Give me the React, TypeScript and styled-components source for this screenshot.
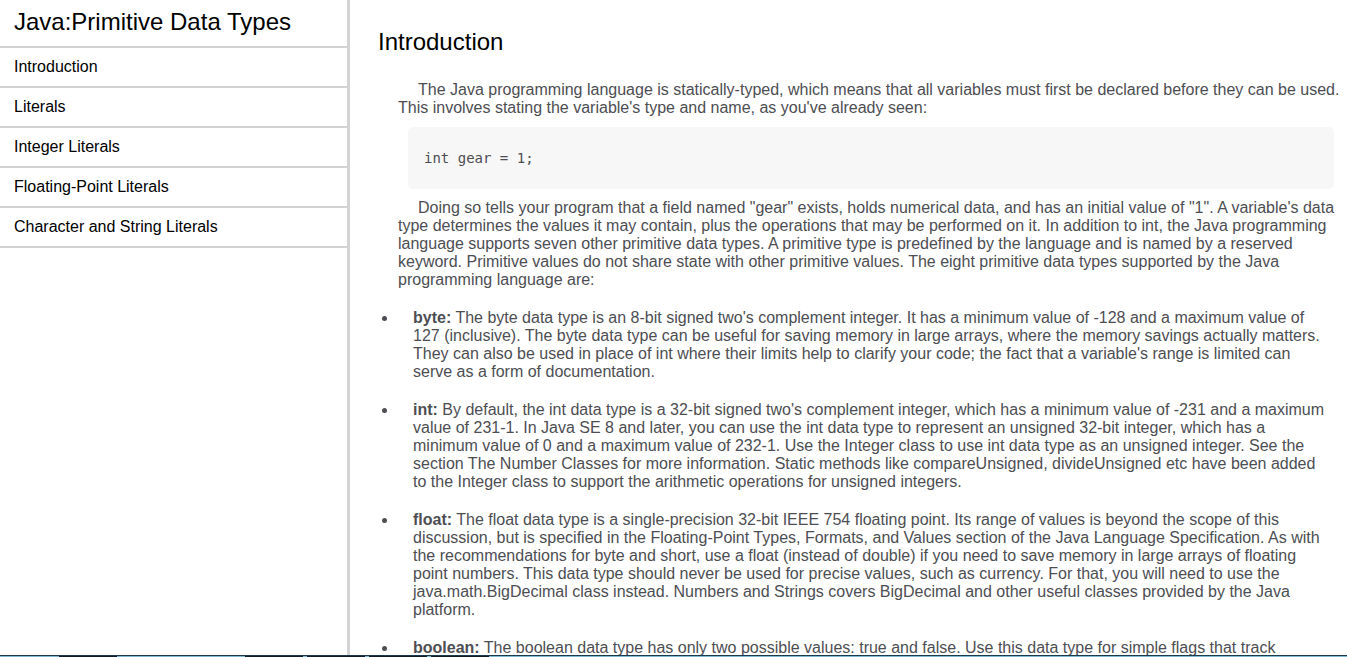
import React from "react";
import styled, { createGlobalStyle } from "styled-components";

const GlobalStyle = createGlobalStyle`
  * { box-sizing: border-box; }
  html, body, #root { height: 100%; }
  body {
    margin: 0;
    overflow: hidden;
    background: #fff;
    font-family: "Liberation Sans", Arial, sans-serif;
    font-size: 16px;
    line-height: 18px;
    color: #000;
  }
`;

const Shell = styled.div`
  display: flex;
  flex-direction: column;
  height: 100%;
`;

const Page = styled.div`
  flex: 1;
  min-height: 0;
  display: grid;
  grid-template-columns: 350px minmax(0, 1fr);
  grid-template-rows: minmax(0, 1fr);
  overflow: hidden;
`;

const Sidebar = styled.nav`
  border-right: 3px solid #d3d3d3;
`;

const SidebarTitle = styled.h1`
  margin: 0;
  padding: 8px 14px 10px;
  font-size: 24px;
  line-height: 28px;
  font-weight: 400;
`;

const NavList = styled.ul`
  list-style: none;
  margin: 0;
  padding: 0;
  border-bottom: 2px solid #d3d3d3;
`;

const NavLink = styled.a`
  display: block;
  border-top: 2px solid #d3d3d3;
  padding: 10px 14px;
  color: #000;
  text-decoration: none;
`;

const Main = styled.main`
  min-height: 0;
  overflow: hidden;
  padding: 28px 4px 0 28px;
`;

const SectionTitle = styled.h2`
  margin: 0 0 25px;
  font-size: 24px;
  line-height: 28px;
  font-weight: 400;
`;

const Paragraph = styled.p`
  margin: 0 0 0 20px;
  text-indent: 20px;
  color: #4d4e53;
`;

const Code = styled.pre`
  margin: 10px 9px 10px 30px;
  padding: 22px 16px;
  border-radius: 5px;
  background: #f7f7f7;
  font-family: Consolas, "DejaVu Sans Mono", monospace;
  font-size: 14px;
  line-height: 18px;
  color: #4d4e53;
`;

const TypeList = styled.ul`
  margin: 20px 0 0;
  padding: 0 12px 0 20px;
  color: #4d4e53;
`;

const TypeItem = styled.li`
  margin-bottom: 20px;
  padding-left: 15px;
`;

const TaskbarEdge = styled.div`
  display: flex;
  height: 2px;
  border-top: 1px solid #1b3a50;
`;

const EdgePart = styled.span<{ $width?: number; $lit?: boolean }>`
  flex: ${({ $width }) => ($width ? `0 0 ${$width}px` : "1")};
  background: ${({ $lit }) => ($lit ? "#7fb9d6" : "#101c26")};
`;

const topics = [
  ["Introduction", "introduction"],
  ["Literals", "literals"],
  ["Integer Literals", "integer-literals"],
  ["Floating-Point Literals", "floating-point-literals"],
  ["Character and String Literals", "character-and-string-literals"],
];

const types = [
  ["byte", "The byte data type is an 8-bit signed two's complement integer. It has a minimum value of -128 and a maximum value of 127 (inclusive). The byte data type can be useful for saving memory in large arrays, where the memory savings actually matters. They can also be used in place of int where their limits help to clarify your code; the fact that a variable's range is limited can serve as a form of documentation."],
  ["int", "By default, the int data type is a 32-bit signed two's complement integer, which has a minimum value of -231 and a maximum value of 231-1. In Java SE 8 and later, you can use the int data type to represent an unsigned 32-bit integer, which has a minimum value of 0 and a maximum value of 232-1. Use the Integer class to use int data type as an unsigned integer. See the section The Number Classes for more information. Static methods like compareUnsigned, divideUnsigned etc have been added to the Integer class to support the arithmetic operations for unsigned integers."],
  ["float", "The float data type is a single-precision 32-bit IEEE 754 floating point. Its range of values is beyond the scope of this discussion, but is specified in the Floating-Point Types, Formats, and Values section of the Java Language Specification. As with the recommendations for byte and short, use a float (instead of double) if you need to save memory in large arrays of floating point numbers. This data type should never be used for precise values, such as currency. For that, you will need to use the java.math.BigDecimal class instead. Numbers and Strings covers BigDecimal and other useful classes provided by the Java platform."],
  ["boolean", "The boolean data type has only two possible values: true and false. Use this data type for simple flags that track"],
];

export default function App() {
  return (
    <>
      <GlobalStyle />
      <Shell>
        <Page>
          <Sidebar>
            <SidebarTitle>Java:Primitive Data Types</SidebarTitle>
            <NavList>
              {topics.map(([label, id]) => (
                <li key={id}><NavLink href={`#${id}`}>{label}</NavLink></li>
              ))}
            </NavList>
          </Sidebar>
          <Main>
            <SectionTitle id="introduction">Introduction</SectionTitle>
            <Paragraph>
              The Java programming language is statically-typed, which means that all variables must first be declared before they can be used. This involves stating the variable's type and name, as you've already seen:
            </Paragraph>
            <Code><code>int gear = 1;</code></Code>
            <Paragraph>
              Doing so tells your program that a field named "gear" exists, holds numerical data, and has an initial value of "1". A variable's data type determines the values it may contain, plus the operations that may be performed on it. In addition to int, the Java programming language supports seven other primitive data types. A primitive type is predefined by the language and is named by a reserved keyword. Primitive values do not share state with other primitive values. The eight primitive data types supported by the Java programming language are:
            </Paragraph>
            <TypeList>
              {types.map(([name, text]) => (
                <TypeItem key={name}><strong>{name}:</strong> {text}</TypeItem>
              ))}
            </TypeList>
          </Main>
        </Page>
        <TaskbarEdge>
          <EdgePart $width={59} $lit />
          <EdgePart $width={58} />
          <EdgePart $width={128} $lit />
          <EdgePart $width={58} />
          <EdgePart $width={4} $lit />
          <EdgePart $width={58} />
          <EdgePart $width={4} $lit />
          <EdgePart $width={58} />
          <EdgePart $width={4} $lit />
          <EdgePart $width={58} />
          <EdgePart $lit />
        </TaskbarEdge>
      </Shell>
    </>
  );
}
